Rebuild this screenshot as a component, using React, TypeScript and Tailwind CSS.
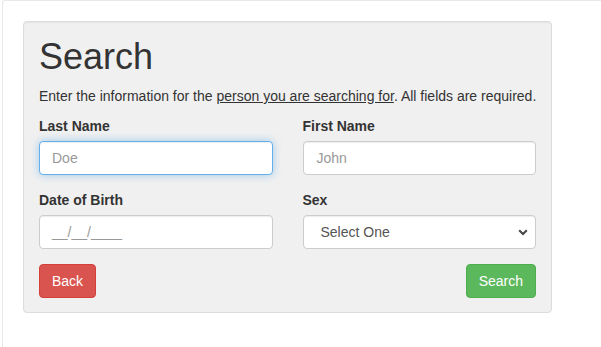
import React from "react";

export default function App() {
  return (
    <div className="w-[601px] h-[347px] bg-white overflow-hidden font-['Liberation_Sans',Arial,sans-serif]">
      <div className="ml-[2px] h-[347px] border-t border-l border-[#e8e8e8] rounded-tl-[3px] pt-[20px] pl-[20px]">
        <div className="w-[529px] h-[292px] bg-[#f0f0f0] border border-[#dcdcdc] rounded-[4px] shadow-[inset_0_1px_1px_rgba(0,0,0,0.05)] p-[15px] text-[#333] text-[14px] leading-[20px]">
          <h1 className="text-[36px] leading-[39px] font-normal text-[#333] mb-[10px]">Search</h1>
          <p className="mb-[10px] whitespace-nowrap">
            Enter the information for the <span className="underline">person you are searching for</span>. All fields are required.
          </p>
          <div className="grid grid-cols-2 gap-x-[30px]">
            <div className="mb-[15px]">
              <label className="block font-bold mb-[5px]">Last Name</label>
              <div className="h-[34px] bg-white border border-[#66afe9] rounded-[4px] shadow-[inset_0_1px_1px_rgba(0,0,0,0.075),0_0_8px_rgba(102,175,233,0.6)] px-[12px] flex items-center text-[#999]">
                Doe
              </div>
            </div>
            <div className="mb-[15px]">
              <label className="block font-bold mb-[5px]">First Name</label>
              <div className="h-[34px] bg-white border border-[#ccc] rounded-[4px] shadow-[inset_0_1px_1px_rgba(0,0,0,0.075)] px-[13px] flex items-center text-[#999]">
                John
              </div>
            </div>
            <div className="mb-[15px]">
              <label className="block font-bold mb-[5px]">Date of Birth</label>
              <div className="h-[34px] bg-white border border-[#ccc] rounded-[4px] shadow-[inset_0_1px_1px_rgba(0,0,0,0.075)] px-[12px] flex items-center text-[#999]">
                __/__/____
              </div>
            </div>
            <div className="mb-[15px]">
              <label className="block font-bold mb-[5px]">Sex</label>
              <div className="h-[34px] bg-white border border-[#ccc] rounded-[4px] shadow-[inset_0_1px_1px_rgba(0,0,0,0.075)] pl-[17px] pr-[6px] flex items-center justify-between text-[#555]">
                <span>Select One</span>
                <svg width="10" height="7" viewBox="0 0 10 7" className="mr-[1px]">
                  <path d="M1.2 1.3 L5 5 L8.8 1.3" stroke="#444" strokeWidth="2" fill="none" />
                </svg>
              </div>
            </div>
          </div>
          <div className="flex justify-between">
            <button className="h-[34px] px-[12px] bg-[#d9534f] border border-[#d43f3a] rounded-[4px] text-white text-[14px]">Back</button>
            <button className="h-[34px] px-[12px] bg-[#5cb85c] border border-[#4cae4c] rounded-[4px] text-white text-[14px]">Search</button>
          </div>
        </div>
      </div>
    </div>
  );
}
